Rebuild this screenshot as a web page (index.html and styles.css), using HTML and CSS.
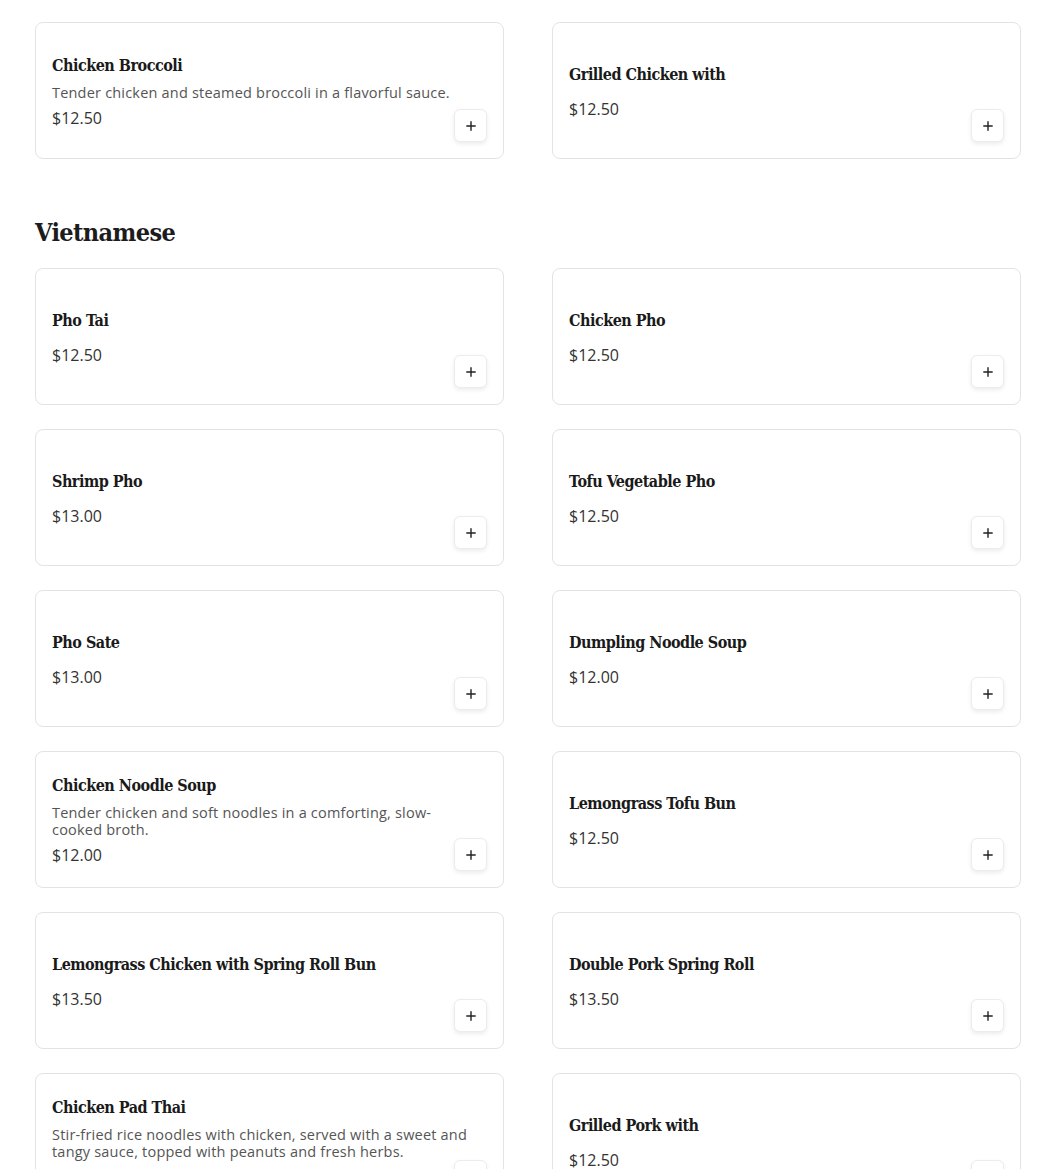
FILE: index.html
```html
<!DOCTYPE html>
<html lang="en">
<head>
<meta charset="utf-8">
<title>Menu</title>
<link rel="stylesheet" href="styles.css">
</head>
<body>
<main class="menu">
  <section class="section">
    <div class="grid">
      <div class="card">
        <div class="info">
          <h3 class="name">Chicken Broccoli</h3>
          <p class="desc">Tender chicken and steamed broccoli in a flavorful sauce.</p>
          <p class="price">$12.50</p>
        </div>
        <button class="add" aria-label="Add"><svg viewBox="0 0 10 10" width="10" height="10"><path d="M5 0.8v8.4M0.8 5h8.4" stroke="#222" stroke-width="1.4" stroke-linecap="round"/></svg></button>
      </div>
      <div class="card">
        <div class="info">
          <h3 class="name">Grilled Chicken with</h3>
          <p class="desc"></p>
          <p class="price">$12.50</p>
        </div>
        <button class="add" aria-label="Add"><svg viewBox="0 0 10 10" width="10" height="10"><path d="M5 0.8v8.4M0.8 5h8.4" stroke="#222" stroke-width="1.4" stroke-linecap="round"/></svg></button>
      </div>
    </div>
  </section>

  <section class="section">
    <h2 class="heading">Vietnamese</h2>
    <div class="grid">
      <div class="card">
        <div class="info">
          <h3 class="name">Pho Tai</h3>
          <p class="desc"></p>
          <p class="price">$12.50</p>
        </div>
        <button class="add" aria-label="Add"><svg viewBox="0 0 10 10" width="10" height="10"><path d="M5 0.8v8.4M0.8 5h8.4" stroke="#222" stroke-width="1.4" stroke-linecap="round"/></svg></button>
      </div>
      <div class="card">
        <div class="info">
          <h3 class="name">Chicken Pho</h3>
          <p class="desc"></p>
          <p class="price">$12.50</p>
        </div>
        <button class="add" aria-label="Add"><svg viewBox="0 0 10 10" width="10" height="10"><path d="M5 0.8v8.4M0.8 5h8.4" stroke="#222" stroke-width="1.4" stroke-linecap="round"/></svg></button>
      </div>
      <div class="card">
        <div class="info">
          <h3 class="name">Shrimp Pho</h3>
          <p class="desc"></p>
          <p class="price">$13.00</p>
        </div>
        <button class="add" aria-label="Add"><svg viewBox="0 0 10 10" width="10" height="10"><path d="M5 0.8v8.4M0.8 5h8.4" stroke="#222" stroke-width="1.4" stroke-linecap="round"/></svg></button>
      </div>
      <div class="card">
        <div class="info">
          <h3 class="name">Tofu Vegetable Pho</h3>
          <p class="desc"></p>
          <p class="price">$12.50</p>
        </div>
        <button class="add" aria-label="Add"><svg viewBox="0 0 10 10" width="10" height="10"><path d="M5 0.8v8.4M0.8 5h8.4" stroke="#222" stroke-width="1.4" stroke-linecap="round"/></svg></button>
      </div>
      <div class="card">
        <div class="info">
          <h3 class="name">Pho Sate</h3>
          <p class="desc"></p>
          <p class="price">$13.00</p>
        </div>
        <button class="add" aria-label="Add"><svg viewBox="0 0 10 10" width="10" height="10"><path d="M5 0.8v8.4M0.8 5h8.4" stroke="#222" stroke-width="1.4" stroke-linecap="round"/></svg></button>
      </div>
      <div class="card">
        <div class="info">
          <h3 class="name">Dumpling Noodle Soup</h3>
          <p class="desc"></p>
          <p class="price">$12.00</p>
        </div>
        <button class="add" aria-label="Add"><svg viewBox="0 0 10 10" width="10" height="10"><path d="M5 0.8v8.4M0.8 5h8.4" stroke="#222" stroke-width="1.4" stroke-linecap="round"/></svg></button>
      </div>
      <div class="card">
        <div class="info">
          <h3 class="name">Chicken Noodle Soup</h3>
          <p class="desc">Tender chicken and soft noodles in a comforting, slow-cooked broth.</p>
          <p class="price">$12.00</p>
        </div>
        <button class="add" aria-label="Add"><svg viewBox="0 0 10 10" width="10" height="10"><path d="M5 0.8v8.4M0.8 5h8.4" stroke="#222" stroke-width="1.4" stroke-linecap="round"/></svg></button>
      </div>
      <div class="card">
        <div class="info">
          <h3 class="name">Lemongrass Tofu Bun</h3>
          <p class="desc"></p>
          <p class="price">$12.50</p>
        </div>
        <button class="add" aria-label="Add"><svg viewBox="0 0 10 10" width="10" height="10"><path d="M5 0.8v8.4M0.8 5h8.4" stroke="#222" stroke-width="1.4" stroke-linecap="round"/></svg></button>
      </div>
      <div class="card">
        <div class="info">
          <h3 class="name">Lemongrass Chicken with Spring Roll Bun</h3>
          <p class="desc"></p>
          <p class="price">$13.50</p>
        </div>
        <button class="add" aria-label="Add"><svg viewBox="0 0 10 10" width="10" height="10"><path d="M5 0.8v8.4M0.8 5h8.4" stroke="#222" stroke-width="1.4" stroke-linecap="round"/></svg></button>
      </div>
      <div class="card">
        <div class="info">
          <h3 class="name">Double Pork Spring Roll</h3>
          <p class="desc"></p>
          <p class="price">$13.50</p>
        </div>
        <button class="add" aria-label="Add"><svg viewBox="0 0 10 10" width="10" height="10"><path d="M5 0.8v8.4M0.8 5h8.4" stroke="#222" stroke-width="1.4" stroke-linecap="round"/></svg></button>
      </div>
      <div class="card">
        <div class="info">
          <h3 class="name">Chicken Pad Thai</h3>
          <p class="desc">Stir-fried rice noodles with chicken, served with a sweet and tangy sauce, topped with peanuts and fresh herbs.</p>
          <p class="price">$12.50</p>
        </div>
        <button class="add" aria-label="Add"><svg viewBox="0 0 10 10" width="10" height="10"><path d="M5 0.8v8.4M0.8 5h8.4" stroke="#222" stroke-width="1.4" stroke-linecap="round"/></svg></button>
      </div>
      <div class="card">
        <div class="info">
          <h3 class="name">Grilled Pork with</h3>
          <p class="desc"></p>
          <p class="price">$12.50</p>
        </div>
        <button class="add" aria-label="Add"><svg viewBox="0 0 10 10" width="10" height="10"><path d="M5 0.8v8.4M0.8 5h8.4" stroke="#222" stroke-width="1.4" stroke-linecap="round"/></svg></button>
      </div>
    </div>
  </section>
</main>
</body>
</html>
```
FILE: styles.css
```css
* { box-sizing: border-box; }

html, body {
  margin: 0;
  padding: 0;
  background: #ffffff;
}

body {
  font-family: "Open Sans", "Noto Sans", sans-serif;
  color: #222;
}

.menu {
  padding: 22px 29px 40px 35px;
}

.section + .section {
  margin-top: 56px;
}

.heading {
  margin: 0 0 17px;
  font-family: "DejaVu Serif Condensed", "DejaVu Serif", serif;
  font-stretch: condensed;
  font-weight: 700;
  font-size: 25px;
  line-height: 36px;
  color: #1c1c1c;
  letter-spacing: -0.6px;
}

.grid {
  display: grid;
  grid-template-columns: 469px 469px;
  column-gap: 48px;
  row-gap: 24px;
}

.card {
  display: grid;
  grid-template-columns: 1fr;
  grid-template-rows: 1fr;
  height: 137px;
  padding: 16px;
  border: 1px solid #e3e3e3;
  border-radius: 8px;
  background: #fff;
}

.info {
  grid-area: 1 / 1;
  align-self: center;
  min-width: 0;
  padding-top: 2px;
  padding-right: 10px;
}

.name {
  margin: 0 0 6px;
  font-family: "DejaVu Serif Condensed", "DejaVu Serif", serif;
  font-stretch: condensed;
  font-weight: 700;
  font-size: 16px;
  line-height: 24px;
  color: #1a1a1a;
  letter-spacing: -0.5px;
}

.desc {
  margin: 0 0 5px;
  font-size: 14.5px;
  line-height: 17px;
  letter-spacing: 0.2px;
  color: #555;
}

.desc:empty {
  margin-bottom: 10px;
}

.price {
  margin: 0;
  font-size: 16px;
  line-height: 24px;
  color: #333;
}

.add {
  grid-area: 1 / 1;
  justify-self: end;
  align-self: end;
  display: flex;
  align-items: center;
  justify-content: center;
  width: 33px;
  height: 33px;
  padding: 0;
  border: 1px solid #ececec;
  border-radius: 6px;
  background: #fff;
  box-shadow: 0 2px 4px rgba(0, 0, 0, 0.08);
  cursor: pointer;
}
```
